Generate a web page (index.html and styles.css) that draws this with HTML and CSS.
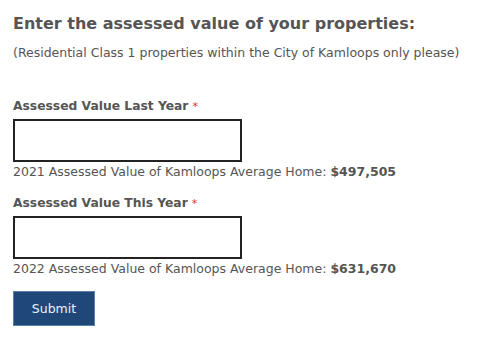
FILE: index.html
```html
<!DOCTYPE html>
<html>
<head>
<meta charset="utf-8">
<link rel="stylesheet" href="styles.css">
</head>
<body>
<div class="page">
  <h1 class="title">Enter the assessed value of your properties:</h1>
  <p class="sub">(Residential Class 1 properties within the City of Kamloops only please)</p>
  <div class="field first">
    <label class="label">Assessed Value Last Year<span class="req">*</span></label>
    <input class="box" type="text">
    <div class="help">2021 Assessed Value of Kamloops Average Home: <b>$497,505</b></div>
  </div>
  <div class="field">
    <label class="label">Assessed Value This Year<span class="req">*</span></label>
    <input class="box" type="text">
    <div class="help">2022 Assessed Value of Kamloops Average Home: <b>$631,670</b></div>
  </div>
  <button class="btn">Submit</button>
</div>
</body>
</html>
```
FILE: styles.css
```css
html, body { margin: 0; padding: 0; background: #fff; }
.page {
  padding: 13px 13px;
  font-family: "DejaVu Sans", Verdana, sans-serif;
  color: #555;
}
.title {
  margin: 0;
  font-size: 16px;
  line-height: 22px;
  font-weight: bold;
  color: #555;
}
.sub {
  margin: 10px 0 0;
  font-size: 12.5px;
  line-height: 16px;
  white-space: nowrap;
}
.field { display: flex; flex-direction: column; align-items: flex-start; }
.field.first { margin-top: 37px; }
.field + .field { margin-top: 15px; }
.label {
  font-size: 12.3px;
  font-weight: bold;
  line-height: 16px;
}
.req { color: #e03030; margin-left: 4px; font-size: 11px; font-weight: normal; }
.box {
  margin: 4px 0 0;
  box-sizing: border-box;
  width: 229px;
  height: 43px;
  border: 2px solid #222;
  padding: 0;
  background: #fff;
}
.help {
  font-size: 12.5px;
  line-height: 16px;
  margin-top: 2px;
  white-space: nowrap;
}
.help b { font-weight: bold; }
.btn {
  display: block;
  margin-top: 14px;
  width: 82px;
  height: 35px;
  background: #1f4878;
  border: 1px solid #5a7fa8;
  color: #eef2f7;
  font-family: "DejaVu Sans", Verdana, sans-serif;
  font-size: 12.5px;
  padding: 0;
}
```
